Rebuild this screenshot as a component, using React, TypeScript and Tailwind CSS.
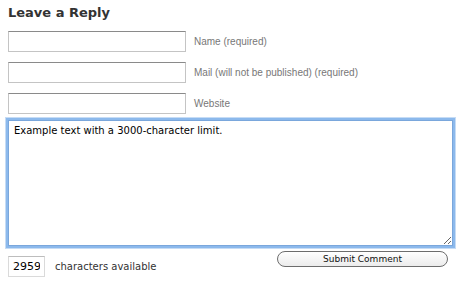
import { useState } from "react";

const inputCls =
  "block h-[21px] w-[178px] border border-[#c4c4c4] border-t-[#8a8a8a] bg-white px-1 text-[12px] outline-none";

const labelCls = "ml-2 text-[10px] text-[#777] [font-family:'Liberation_Sans',Arial,sans-serif]";

export default function App() {
  const [text, setText] = useState("Example text with a 3000-character limit.");
  const left = 3000 - text.length;

  return (
    <div className="h-[285px] w-[465px] bg-white [font-family:'DejaVu_Sans',sans-serif]">
      <form className="flex flex-col pl-2 pt-[5px]" onSubmit={(e) => e.preventDefault()}>
        <h3 className="h-[16px] text-[13px] font-bold leading-[16px] text-[#333]">Leave a Reply</h3>

        <div className="mt-[10px] flex flex-col gap-[10px]">
          <div className="flex items-center">
            <input id="author" type="text" className={inputCls} />
            <label htmlFor="author" className={labelCls}>Name (required)</label>
          </div>
          <div className="flex items-center">
            <input id="email" type="text" className={inputCls} />
            <label htmlFor="email" className={labelCls}>Mail (will not be published) (required)</label>
          </div>
          <div className="flex items-center">
            <input id="url" type="text" className={inputCls} />
            <label htmlFor="url" className={labelCls}>Website</label>
          </div>
        </div>

        <textarea
          value={text}
          onChange={(e) => setText(e.target.value)}
          className="mt-[6px] h-[126px] w-[445px] resize-y border border-[#7aa7dc] px-[5px] py-[3px] text-[10px] leading-[14px] text-black shadow-[0_0_0_2px_#8cb9ec,0_0_0_3px_#c6dcf5] outline-none"
        />

        <div className="mt-[5px] flex items-start">
          <div className="mt-[5px] flex items-center">
            <input
              readOnly
              value={left}
              className="h-[21px] w-[37px] border border-[#dadada] border-t-[#bdbdbd] bg-white px-[4px] text-[11px] text-black outline-none"
            />
            <span className="ml-[10px] text-[10px] text-[#333]">characters available</span>
          </div>
          <button
            type="submit"
            className="ml-auto mr-[17px] h-[16px] w-[171px] rounded-full border border-[#6d6d6d] bg-gradient-to-b from-white to-[#ececec] text-[9px] leading-[14px] text-[#111]"
          >
            Submit Comment
          </button>
        </div>
      </form>
    </div>
  );
}
